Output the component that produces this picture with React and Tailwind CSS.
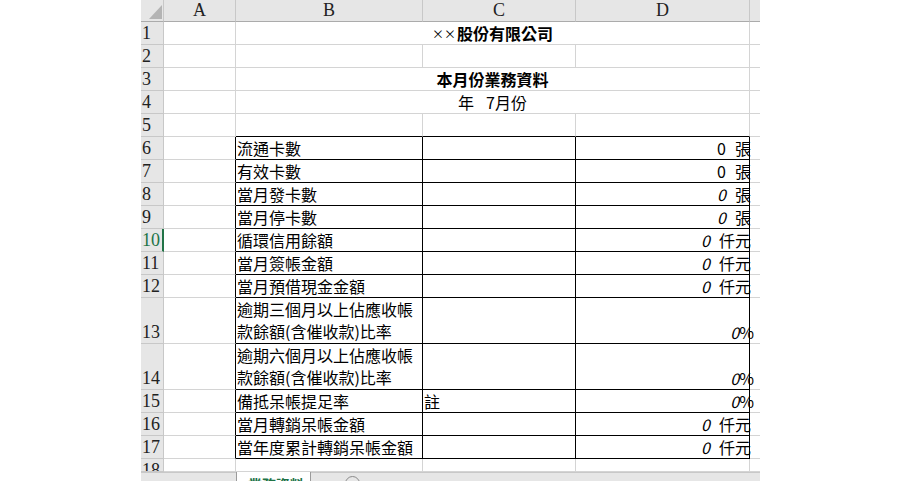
import React from "react";

const CJK = "font-['Noto_Sans_CJK_TC','Noto_Sans_CJK_JP',sans-serif]";
const SERIF = "font-['Liberation_Serif',serif]";

const TABLE = {
  6: { label: "流通卡數", d: ["0", "張"], italic: false },
  7: { label: "有效卡數", d: ["0", "張"], italic: false },
  8: { label: "當月發卡數", d: ["0", "張"], italic: true },
  9: { label: "當月停卡數", d: ["0", "張"], italic: true },
  10: { label: "循環信用餘額", d: ["0", "仟元"], italic: true },
  11: { label: "當月簽帳金額", d: ["0", "仟元"], italic: true },
  12: { label: "當月預借現金金額", d: ["0", "仟元"], italic: true },
  13: { label: ["逾期三個月以上佔應收帳", "款餘額(含催收款)比率"], pct: true, italic: true },
  14: { label: ["逾期六個月以上佔應收帳", "款餘額(含催收款)比率"], pct: true, italic: true },
  15: { label: "備抵呆帳提足率", c: "註", pct: true, italic: true },
  16: { label: "當月轉銷呆帳金額", d: ["0", "仟元"], italic: true },
  17: { label: "當年度累計轉銷呆帳金額", d: ["0", "仟元"], italic: true },
};

function RowHeader({ n }) {
  const active = n === 10;
  const last = n === 18;
  return (
    <div
      className={
        "flex overflow-hidden bg-[#e6e6e6] border-b border-b-[#c8c8c8] pl-[1px] text-[18px] leading-[19px] " +
        SERIF +
        (last ? " items-start pt-[2px]" : " items-end pb-[1px]") +
        (active
          ? " border-r-2 border-r-[#217346] text-[#217346] bg-[#d9d9d9]"
          : " border-r border-r-[#c8c8c8] text-[#222]")
      }
    >
      {n}
    </div>
  );
}

function Cell({ right, bottom, className = "", children }) {
  return (
    <div
      className={
        "flex items-end border-r border-b " +
        (right ? "border-r-black " : "border-r-[#d4d4d4] ") +
        (bottom ? "border-b-black " : "border-b-[#d4d4d4] ") +
        className
      }
    >
      {children}
    </div>
  );
}

function DValue({ row }) {
  const t = TABLE[row];
  if (t.pct) {
    return (
      <span className="relative mr-[-5px] flex items-end">
        <span className="italic">0</span>
        <span>%</span>
      </span>
    );
  }
  return (
    <span className="relative mr-[-2px] flex items-end">
      <span className={t.italic ? "italic" : ""}>{t.d[0]}</span>
      <span className="ml-[9px]">{t.d[1]}</span>
    </span>
  );
}

function SheetRow({ n }) {
  const inTable = n >= 6 && n <= 17;
  const topEdge = n === 5;
  const cells = [<RowHeader key="h" n={n} />];

  if (n === 1 || n === 3 || n === 4) {
    cells.push(<Cell key="a" />);
    let content = null;
    if (n === 1)
      content = (
        <span className="flex items-end font-bold">
          <span className="text-[12px] font-normal leading-[17px] mr-[1px]">××</span>
          <span>股份有限公司</span>
        </span>
      );
    if (n === 3) content = <span className="font-bold">本月份業務資料</span>;
    if (n === 4)
      content = (
        <span className="flex">
          <span>年</span>
          <span className="ml-[12px]">7月份</span>
        </span>
      );
    cells.push(
      <Cell key="bcd" className="col-span-3 justify-center pb-[2px] leading-[18px]">
        {content}
      </Cell>
    );
  } else if (inTable) {
    const t = TABLE[n];
    const multi = Array.isArray(t.label);
    const label = multi ? (
      <span className="flex flex-col leading-[22px]">
        <span>{t.label[0]}</span>
        <span>{t.label[1]}</span>
      </span>
    ) : (
      <span>{t.label}</span>
    );
    cells.push(<Cell key="a" right />);
    cells.push(
      <Cell
        key="b"
        right
        bottom
        className={"pl-[1px] leading-[18px] whitespace-nowrap " + (multi ? "pb-[1px]" : "pb-[2px]")}
      >
        {label}
      </Cell>
    );
    cells.push(
      <Cell key="c" right bottom className="pl-[1px] pb-[2px] leading-[18px]">
        {t.c || null}
      </Cell>
    );
    cells.push(
      <Cell key="d" right bottom className="justify-end pb-[2px] leading-[18px]">
        <DValue row={n} />
      </Cell>
    );
  } else {
    cells.push(<Cell key="a" />);
    cells.push(<Cell key="b" bottom={topEdge} />);
    cells.push(<Cell key="c" bottom={topEdge} />);
    cells.push(<Cell key="d" bottom={topEdge} />);
  }
  cells.push(<div key="e" className="border-b border-b-[#d4d4d4]" />);
  return cells;
}

export default function App() {
  const rows = [];
  for (let i = 1; i <= 18; i++) rows.push(...SheetRow({ n: i }));
  return (
    <div className={"w-[900px] h-[481px] overflow-hidden bg-white flex text-black " + CJK}>
      <div className="ml-[141px] w-[619px] flex flex-col">
        <div className="grid grid-cols-[23px_72px_187px_153px_174px_10px] grid-rows-[22px_repeat(12,23px)_46px_46px_repeat(3,23px)_13px] text-[16px]">
          {/* column headers */}
          <div className="relative bg-[#e6e6e6] border-r border-b border-r-[#c8c8c8] border-b-[#ababab]">
            <svg className="absolute left-[8px] top-[5px]" width="13" height="14" viewBox="0 0 13 14">
              <polygon points="13,0 13,14 0,14" fill="#b4b4b4" />
            </svg>
          </div>
          {["A", "B", "C", "D"].map((c) => (
            <div
              key={c}
              className={
                "flex items-end justify-center bg-[#e6e6e6] border-r border-b border-b-[#ababab] border-r-[#c8c8c8] pb-[1px] text-[18px] leading-[19px] text-[#222] " +
                SERIF
              }
            >
              {c}
            </div>
          ))}
          <div className="bg-[#e6e6e6] border-b border-b-[#ababab]" />
          {rows}
        </div>
        {/* sheet tab bar */}
        <div className="flex h-[9px] overflow-hidden">
          <div className="w-[95px] bg-[#e6e6e6] border-t border-t-[#c8c8c8]" />
          <div className="w-[75px] bg-white border-x border-x-[#9b9b9b] pl-[11px] pt-[4px] text-[14px] leading-[16px] font-bold text-[#217346] underline whitespace-nowrap">
            業務資料
          </div>
          <div className="flex-1 bg-[#e6e6e6] border-t border-t-[#c8c8c8] pl-[34px] pt-[3px]">
            <div className="w-[15px] h-[15px] rounded-full border border-[#8a8a8a]" />
          </div>
        </div>
      </div>
    </div>
  );
}
